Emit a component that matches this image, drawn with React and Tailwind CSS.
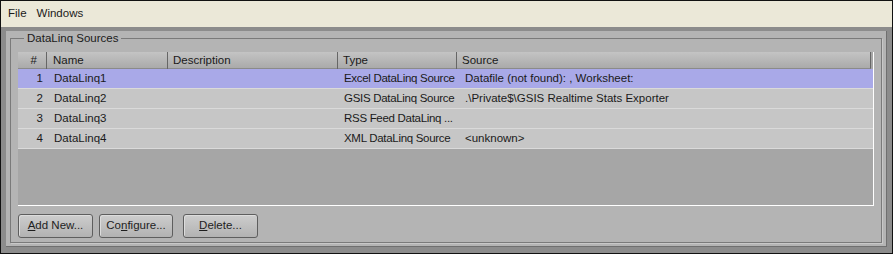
const rows = [
  { n: 1, name: "DataLinq1", desc: "", type: "Excel DataLinq Source", source: "Datafile (not found): , Worksheet:" },
  { n: 2, name: "DataLinq2", desc: "", type: "GSIS DataLinq Source", source: ".\\Private$\\GSIS Realtime Stats Exporter" },
  { n: 3, name: "DataLinq3", desc: "", type: "RSS Feed DataLinq ...", source: "" },
  { n: 4, name: "DataLinq4", desc: "", type: "XML DataLinq Source", source: "<unknown>" },
];

const cols = "grid grid-cols-[29px_121px_170px_119px_1fr]";

const Button = ({ children, w, extra = "" }) => (
  <button
    className={`${w} ${extra} h-[24px] rounded-[3px] border border-[#5e5e5e] bg-gradient-to-b from-[#cdcdcd] to-[#b2b2b2] text-[11.5px] text-[#1e1e1e] shadow-[inset_1px_1px_0_#dcdcdc]`}
  >
    {children}
  </button>
);

export default function App() {
  return (
    <div
      className="w-[893px] h-[254px] flex flex-col border border-[#111] bg-[#8c8c8c] text-[#1a1a1a]"
      style={{ fontFamily: '"Liberation Sans", Arial, sans-serif' }}
    >
      {/* menu */}
      <div className="h-[26px] flex items-center gap-[10px] pl-[7px] bg-[#ebe8d8] text-[11.5px]">
        <span>File</span>
        <span>Windows</span>
      </div>

      {/* body */}
      <div className="flex-1 pt-[4px] px-[5px] pb-[6px]">
        <div className="h-full bg-[#b4b4b4] border-r border-b border-[#6f6f6f] px-[4px] pb-[3px]">
          <fieldset className="h-full border border-[#7a7a7a] shadow-[1px_1px_0_#c8c8c8] px-[7px] pt-[6px]">
            <legend className="ml-[6px] px-[3px] text-[11.5px] leading-[15px]">DataLinq Sources</legend>

            {/* table */}
            <div className="h-[154px] flex flex-col bg-[#a6a6a6] border-r border-b border-white text-[11.5px]">
              <div className={`${cols} h-[17px] bg-gradient-to-b from-[#c4c4c4] to-[#aaaaaa] border-b border-[#8a8a8a] mr-[2px] border-r border-r-[#666]`}>
                <div className="border-r border-[#666] text-right pr-[9px] leading-[17px]">#</div>
                <div className="border-r border-[#666] pl-[6px] leading-[17px]">Name</div>
                <div className="border-r border-[#666] pl-[5px] leading-[17px]">Description</div>
                <div className="border-r border-[#666] pl-[5px] leading-[17px]">Type</div>
                <div className="pl-[5px] leading-[17px]">Source</div>
              </div>
              {rows.map((r, i) => (
                <div
                  key={r.n}
                  className={`${cols} h-[20px] border-b border-[#dadada] leading-[19px] ${i === 0 ? "bg-[#a9a9e8]" : "bg-[#c6c6c6]"}`}
                >
                  <div className="text-right pr-[4px]">{r.n}</div>
                  <div className="pl-[7px]">{r.name}</div>
                  <div className="pl-[5px]">{r.desc}</div>
                  <div className="pl-[6px] whitespace-nowrap tracking-[-0.3px]">{r.type}</div>
                  <div className="pl-[8px] whitespace-nowrap">{r.source}</div>
                </div>
              ))}
            </div>

            {/* buttons */}
            <div className="flex gap-[6px] mt-[8px]">
              <Button w="w-[75px]">
                <u>A</u>dd New...
              </Button>
              <Button w="w-[74px]">
                Co<u>n</u>figure...
              </Button>
              <Button w="w-[75px]" extra="ml-[4px]">
                <u>D</u>elete...
              </Button>
            </div>
          </fieldset>
        </div>
      </div>
    </div>
  );
}
